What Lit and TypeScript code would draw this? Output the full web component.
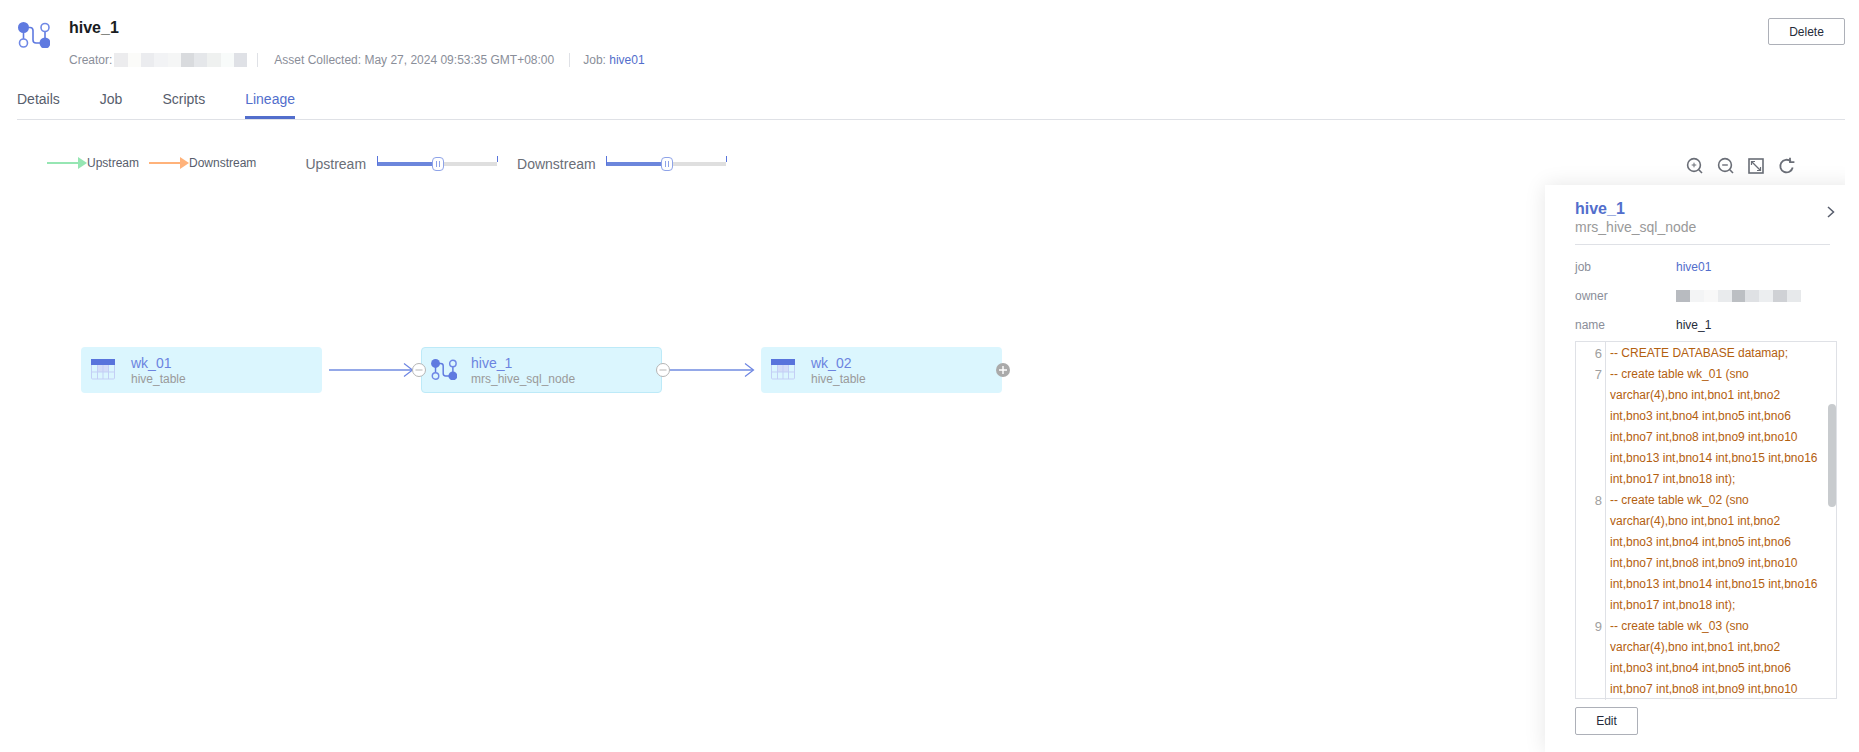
import { LitElement, html, css, svg } from "lit";
import { customElement } from "lit/decorators.js";

const creatorCells = ["#ececee", "#fbfbf9", "#ebecef", "#f2f3f5", "#f5f6f6", "#d9dbde", "#e5e7ea", "#eff1f0", "#f8fbfa", "#dfe1e6"];
const ownerCells = ["#b8bbc0", "#f3f4f5", "#f8f8f8", "#e9ebed", "#bcbfc3", "#dfe1e4", "#eceef0", "#cfd1d5", "#e7e9eb"];
const block = "int,bno3 int,bno4 int,bno5 int,bno6 int,bno7 int,bno8 int,bno9 int,bno10";
const tail = " int,bno13 int,bno14 int,bno15 int,bno16 int,bno17 int,bno18 int);";
const createLine = (t: string) => `-- create table ${t} (sno varchar(4),bno int,bno1 int,bno2 ${block}`;
const codeLines = [
  { n: 6, t: "-- CREATE DATABASE datamap;" },
  { n: 7, t: createLine("wk_01") + tail },
  { n: 8, t: createLine("wk_02") + tail },
  { n: 9, t: createLine("wk_03") },
];
const nodes = [
  { x: 81, y: 228, name: "wk_01", sub: "hive_table", kind: "table", active: false },
  { x: 421, y: 228, name: "hive_1", sub: "mrs_hive_sql_node", kind: "flow", active: true },
  { x: 761, y: 228, name: "wk_02", sub: "hive_table", kind: "table", active: false },
];

const lineageIcon = (w: number, h: number) => html`<svg width=${w} height=${h} viewBox="0 0 32 26" fill="none">
  <path d="M5.5 5.5V17M27 9V21M5.5 5.5H12Q15 5.5 15 8.5V18Q15 21 18 21H27" stroke="#5f7ae0" stroke-width="1.6"/>
  <circle cx="5.5" cy="5.5" r="5.5" fill="#5f7ae0"/>
  <circle cx="27" cy="21" r="5.5" fill="#5f7ae0"/>
  <circle cx="27" cy="5.5" r="4" fill="#fff" stroke="#6f88e6" stroke-width="1.6"/>
  <circle cx="5.5" cy="21" r="4" fill="#fff" stroke="#6f88e6" stroke-width="1.6"/>
</svg>`;
const lineageIconNode = (w: number, h: number) => html`<svg width=${w} height=${h} viewBox="0 0 32 26" fill="none">
  <path d="M5.5 5.5V17M27 9V21M5.5 5.5H12Q15 5.5 15 8.5V18Q15 21 18 21H27" stroke="#5f7ae0" stroke-width="1.8"/>
  <circle cx="5.5" cy="5.5" r="5.5" fill="#5f7ae0"/>
  <circle cx="27" cy="21" r="5.5" fill="#5f7ae0"/>
  <circle cx="27" cy="5.5" r="4" fill="none" stroke="#6f88e6" stroke-width="1.8"/>
  <circle cx="5.5" cy="21" r="4" fill="none" stroke="#6f88e6" stroke-width="1.8"/>
</svg>`;
const tableIcon = html`<svg width="24" height="21" viewBox="0 0 24 21" fill="none">
  <rect x="6" y="6" width="12" height="7" fill="#d4ddf8"/>
  <rect x=".5" y=".5" width="23" height="19.5" rx="1" stroke="#c3cff5" fill="none"/>
  <path d="M.5 13H23.5M6.5 6V20M12 6V20M17.5 6V20" stroke="#c3cff5"/>
  <rect x="0" y="0" width="24" height="6" fill="#5874dc"/>
</svg>`;
const arrowIcon = (c: string) => html`<svg width="40" height="12" viewBox="0 0 40 12"><path d="M0 6H32" stroke=${c} stroke-width="2"/><path d="M31 0L40 6L31 12Z" fill=${c}/></svg>`;
const toolIcon = (d: unknown) => html`<svg width="18" height="18" viewBox="0 0 18 18" fill="none" stroke="#6a6e77" stroke-width="1.6">${d}</svg>`;
const zoomIn = toolIcon(svg`<circle cx="8" cy="8" r="6.4"/><path d="M12.8 12.8L16 16"/><path d="M5.7 8H10.3M8 5.7V10.3" stroke-width="1"/>`);
const zoomOut = toolIcon(svg`<circle cx="8" cy="8" r="6.4"/><path d="M12.8 12.8L16 16"/><path d="M5.2 8H10.8" stroke-width="1.4"/>`);
const fit = toolIcon(svg`<rect x="2" y="2" width="14" height="14"/><path d="M5 5L13 13" stroke-width="1.2"/><path d="M4.5 8V4.5H8M13.5 10V13.5H10" stroke-width="1.2"/>`);
const refresh = toolIcon(svg`<path d="M14.7 10.5A6.3 6.3 0 1 1 12.8 4.4" stroke-width="1.8"/><path d="M12 .8V5.2H16.4" stroke-width="1.8"/>`);

@customElement("lin-slider")
class LinSlider extends LitElement {
  static styles = css`
    :host { display: block; position: relative; width: 121px; height: 16px; margin-top: 2px; }
    .track { position: absolute; left: 0; right: 1px; top: 6px; height: 4px; background: #dfdfdf; }
    .fill { position: absolute; left: 0; top: 6px; width: 56px; height: 4px; background: #6c86dc; }
    .tick { position: absolute; top: 0; width: 1px; background: #5874dc; }
    .tick.a { left: 0; height: 9px; }
    .tick.b { right: 0; height: 6px; }
    .thumb { position: absolute; left: 55px; top: 1px; width: 10px; height: 12px; background: #fff; border: 1px solid #8ea3e8; border-radius: 4px; display: flex; align-items: center; justify-content: center; gap: 2px; }
    .thumb i { display: block; width: 1px; height: 6px; background: #8ea3e8; }
  `;
  render() {
    return html`<div class="track"></div><div class="fill"></div><div class="tick a"></div><div class="tick b"></div><div class="thumb"><i></i><i></i></div>`;
  }
}

@customElement("app-root")
class AppRoot extends LitElement {
  static styles = css`
    :host { display: block; height: 752px; font-family: "Liberation Sans", Arial, sans-serif; background: #fff; color: #252b3a; }
    .root { height: 752px; display: flex; flex-direction: column; }
    .head { padding: 0 14px 0 17px; }
    .header { height: 78px; display: flex; box-sizing: border-box; padding-top: 18px; }
    .logo { width: 32px; height: 26px; margin: 4px 19px 0 1px; flex: none; }
    .info { flex: 1; }
    .title { font-size: 16px; font-weight: 700; line-height: 19px; color: #191c22; }
    .meta { display: flex; align-items: center; margin-top: 15px; font-size: 12px; line-height: 16px; color: #8a8e99; }
    .meta a { color: #526ecc; }
    .meta .sep { width: 1px; height: 14px; background: #dfe1e6; }
    .meta .s1 { margin: 0 16px 0 10px; }
    .meta .s2 { margin: 0 13px 0 15px; }
    .blur { display: flex; height: 14px; }
    .blur i { display: block; flex: 1; }
    .creator { width: 133px; margin-left: 2px; }
    .del { width: 77px; height: 27px; box-sizing: border-box; border: 1px solid #adb0b8; border-radius: 2px; background: #fff; font: 12px "Liberation Sans", Arial, sans-serif; color: #252b3a; padding: 0; }
    .tabs { display: flex; height: 41px; box-sizing: border-box; box-shadow: 0 1px 0 #dfe1e6; }
    .tab { font-size: 14px; line-height: 41px; height: 41px; padding-top: 1px; box-sizing: border-box; color: #575d6c; }
    .tab.on { color: #526ecc; border-bottom: 3px solid #526ecc; }
    .t1 { margin-right: 40px; } .t2 { margin-right: 40px; } .t3 { margin-right: 40px; }
    .canvas { position: relative; flex: 1; margin-right: 14px; overflow: hidden; }
    .controls { display: flex; align-items: center; height: 20px; margin-top: 34px; padding-left: 47px; padding-right: 49px; color: #575d6c; }
    .lg { display: flex; align-items: center; font-size: 12px; }
    .lg.up { margin-right: 10px; }
    .lbl { font-size: 14px; color: #6a6e77; padding-top: 2px; }
    .lbl.u { margin-left: 49px; margin-right: 11px; }
    .lbl.d { margin-left: 19px; margin-right: 10px; }
    .tools { margin-left: auto; margin-top: 6px; display: flex; gap: 12.7px; }
    .edges { position: absolute; left: 0; top: 0; }
    .node { position: absolute; width: 241px; height: 46px; box-sizing: border-box; border-radius: 4px; background: #dbf6fe; display: flex; align-items: flex-start; padding: 12px 0 0 10px; }
    .node.active { border: 1px solid #bdeaf8; padding: 11px 0 0 9px; }
    .nicon { width: 26px; height: 21px; margin-right: 14px; flex: none; }
    .ntext { margin-top: -4px; }
    .nname { font-size: 14px; line-height: 16px; color: #6b84e0; }
    .nsub { font-size: 12px; line-height: 14px; margin-top: 1px; color: #9a9a9a; }
    .panel { position: absolute; left: 1545px; top: 66px; right: -14px; bottom: 0; background: #fff; box-shadow: 0 0 20px rgba(0,0,0,.1); box-sizing: border-box; padding: 15px 22px 0 30px; }
    .ptitle { font-size: 16px; font-weight: 700; color: #526ecc; line-height: 18px; }
    .psub { font-size: 14px; color: #999; line-height: 17px; margin-top: 1px; }
    .phead { position: relative; border-bottom: 1px solid #dfe1e6; height: 44px; margin-right: 7px; }
    .chev { position: absolute; right: -6px; top: 5px; }
    .row { display: flex; font-size: 12px; height: 29px; align-items: center; color: #8a8e99; }
    .row .k { width: 101px; }
    .row a { color: #526ecc; }
    .row .v { color: #252b3a; }
    .rows { margin-top: 7px; }
    .owner { width: 125px; height: 12px; }
    .code { position: relative; height: 358px; box-sizing: border-box; border: 1px solid #dfe1e6; display: flex; flex-direction: column; margin-top: 2px; font-size: 12px; line-height: 21px; }
    .line { display: flex; }
    .line:last-of-type { flex: 1; }
    .num { width: 30px; box-sizing: border-box; border-right: 1px solid #dfe1e6; padding: 1px 3px 0 0; text-align: right; color: #a0a0a0; flex: none; font-size: 13px; }
    .txt { width: 213px; margin-left: 4px; padding-top: 1px; color: #b3600f; }
    .line + .line .num, .line + .line .txt { padding-top: 0; }
    .thumbbar { position: absolute; right: 0; top: 62px; width: 8px; height: 103px; border-radius: 4px; background: #c8cbce; }
    .edit { display: block; width: 63px; height: 28px; box-sizing: border-box; margin-top: 8px; border: 1px solid #adb0b8; border-radius: 2px; background: #fff; font: 12px "Liberation Sans", Arial, sans-serif; color: #252b3a; padding: 0; }
  `;

  private cells(list: string[]) {
    return list.map((c) => html`<i style="background:${c}"></i>`);
  }

  render() {
    return html`<div class="root">
      <div class="head">
        <div class="header">
          <div class="logo">${lineageIcon(32, 26)}</div>
          <div class="info">
            <div class="title">hive_1</div>
            <div class="meta">
              <span>Creator:</span>
              <div class="blur creator">${this.cells(creatorCells)}</div>
              <div class="sep s1"></div>
              <span>Asset Collected: May 27, 2024 09:53:35 GMT+08:00</span>
              <div class="sep s2"></div>
              <span>Job: <a>hive01</a></span>
            </div>
          </div>
          <button class="del">Delete</button>
        </div>
        <div class="tabs">
          <div class="tab t1">Details</div>
          <div class="tab t2">Job</div>
          <div class="tab t3">Scripts</div>
          <div class="tab on">Lineage</div>
        </div>
      </div>
      <div class="canvas">
        <div class="controls">
          <div class="lg up">${arrowIcon("#96e6b3")}<span>Upstream</span></div>
          <div class="lg">${arrowIcon("#ffb27a")}<span>Downstream</span></div>
          <span class="lbl u">Upstream</span><lin-slider></lin-slider>
          <span class="lbl d">Downstream</span><lin-slider></lin-slider>
          <div class="tools">${zoomIn}${zoomOut}${fit}${refresh}</div>
        </div>
        <svg class="edges" width="1100" height="300" fill="none">
          <path d="M329 251H412" stroke="#94a8e8" stroke-width="2"/>
          <path d="M404 244.5L412.5 251L404 257.5" stroke="#6d85e2" stroke-width="1.2"/>
          <path d="M669 251H753" stroke="#94a8e8" stroke-width="2"/>
          <path d="M745 244.5L753.5 251L745 257.5" stroke="#6d85e2" stroke-width="1.2"/>
        </svg>
        ${nodes.map((n) => html`<div class="node ${n.active ? "active" : ""}" style="left:${n.x}px;top:${n.y}px">
          <div class="nicon">${n.kind === "table" ? tableIcon : lineageIconNode(26, 21)}</div>
          <div class="ntext"><div class="nname">${n.name}</div><div class="nsub">${n.sub}</div></div>
        </div>`)}
        <svg class="edges" width="1100" height="300" fill="none">
          <g stroke="#b5b5b5" fill="#fff"><circle cx="419" cy="251" r="6.5"/><circle cx="663" cy="251" r="6.5"/></g>
          <path d="M415.5 251H422.5M659.5 251H666.5" stroke="#b5b5b5"/>
          <circle cx="1003" cy="251" r="7" fill="#aaa"/>
          <path d="M999 251H1007M1003 247V255" stroke="#fff" stroke-width="1.4"/>
        </svg>
        <aside class="panel">
          <div class="phead">
            <div class="ptitle">hive_1</div>
            <div class="psub">mrs_hive_sql_node</div>
            <svg class="chev" width="10" height="14" viewBox="0 0 10 14" fill="none"><path d="M2 2L7.5 7L2 12" stroke="#575d6c" stroke-width="1.5"/></svg>
          </div>
          <div class="rows">
            <div class="row"><span class="k">job</span><a>hive01</a></div>
            <div class="row"><span class="k">owner</span><div class="blur owner">${this.cells(ownerCells)}</div></div>
            <div class="row"><span class="k">name</span><span class="v">hive_1</span></div>
          </div>
          <div class="code">
            ${codeLines.map((l) => html`<div class="line"><div class="num">${l.n}</div><div class="txt">${l.t}</div></div>`)}
            <div class="thumbbar"></div>
          </div>
          <button class="edit">Edit</button>
        </aside>
      </div>
    </div>`;
  }
}
